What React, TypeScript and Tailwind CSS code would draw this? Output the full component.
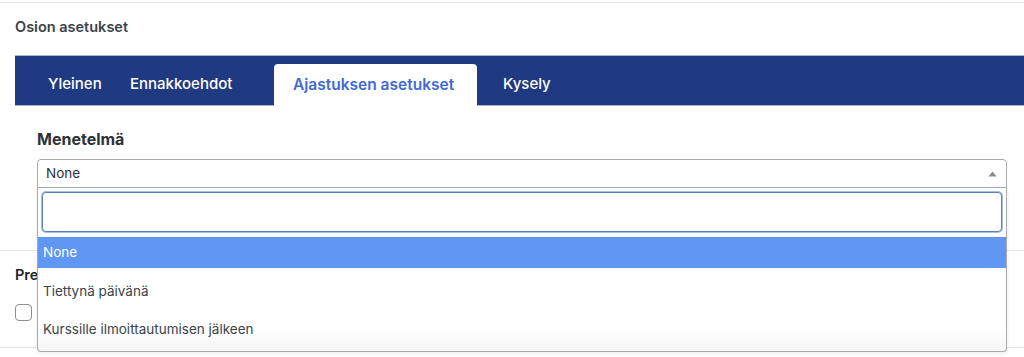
import React from "react";

export default function App() {
  const font = { fontFamily: "Inter, 'Noto Sans', 'Liberation Sans', sans-serif" };
  return (
    <div className="relative h-[357px] w-[1024px] overflow-hidden bg-white text-[#3c434a]" style={font}>
      <div className="h-[2px]" />
      <div className="border-t border-[#e2e4e7]" />
      <div className="px-[15px] pt-[14px] text-[14.5px] leading-[20px] font-semibold text-[#3c434a]">
        Osion asetukset
      </div>
      <div className="mt-[18px] ml-[15px] flex h-[51px] items-end border-y border-[#aab4cc] bg-[#1f3a80] pl-[15px]">
        <div className="flex h-[41px] w-[82px] items-center pl-[18px] text-[15px] font-medium text-white">Yleinen</div>
        <div className="flex h-[41px] w-[162px] items-center pl-[18px] text-[15px] font-medium text-white">Ennakkoehdot</div>
        <div className="mb-[-1px] flex h-[42px] w-[203px] items-center rounded-t-[4px] bg-white pb-[1px] pl-[19px] text-[15.5px] font-semibold text-[#416ad6]">
          Ajastuksen asetukset
        </div>
        <div className="flex h-[41px] w-[100px] items-center pl-[26px] text-[15px] font-medium text-white">Kysely</div>
      </div>

      <div className="ml-[37px] mt-[21px] text-[16px] leading-[24px] font-bold text-[#2c3338]">Menetelmä</div>

      <div className="relative z-10 ml-[37px] mr-[17px] mt-[8px]">
        <div className="flex h-[29px] items-center justify-between rounded-t-[4px] border border-[#a7aaad] bg-white pl-[8px] pr-[7px] text-[13.5px] text-[#2c3338]">
          <span>None</span>
          <svg width="9" height="6" viewBox="0 0 9 6" className="mr-[2px]">
            <path d="M0.5 5.5 L4.5 0.5 L8.5 5.5 Z" fill="#888" />
          </svg>
        </div>
        <div className="absolute left-0 right-0 top-full rounded-b-[4px] border-x border-b border-[#a7aaad] bg-gradient-to-b from-white from-85% to-[#f6f6f6] shadow-[0_2px_4px_rgba(0,0,0,0.07)]">
          <div className="px-[4px] pt-[4px] pb-[5px]">
            <div className="h-[40px] rounded-[4px] border border-[#5b80b8] bg-white shadow-[0_0_0_1px_#a9bfdf]" />
          </div>
          <div className="flex h-[31px] items-center bg-[#5f97f3] pl-[5px] text-[13.5px] text-white">None</div>
          <div className="mt-[4px] flex h-[38px] items-center pl-[5px] text-[13.5px] text-[#3c434a]">Tiettynä päivänä</div>
          <div className="flex h-[38px] items-center pl-[5px] text-[13.5px] text-[#3c434a]">Kurssille ilmoittautumisen jälkeen</div>
          <div className="h-[3px]" />
        </div>
      </div>

      <div className="mt-[62px] border-t border-[#e2e4e7]" />
      <div className="px-[15px] pt-[14px] text-[14.5px] leading-[20px] font-semibold text-[#1d2327]">Pre</div>
      <div className="ml-[15px] mt-[19px] h-[17px] w-[17px] rounded-[4px] border border-[#8c8f94] bg-white" />
      <div className="mt-[26px] border-t border-[#e2e4e7]" />
    </div>
  );
}
